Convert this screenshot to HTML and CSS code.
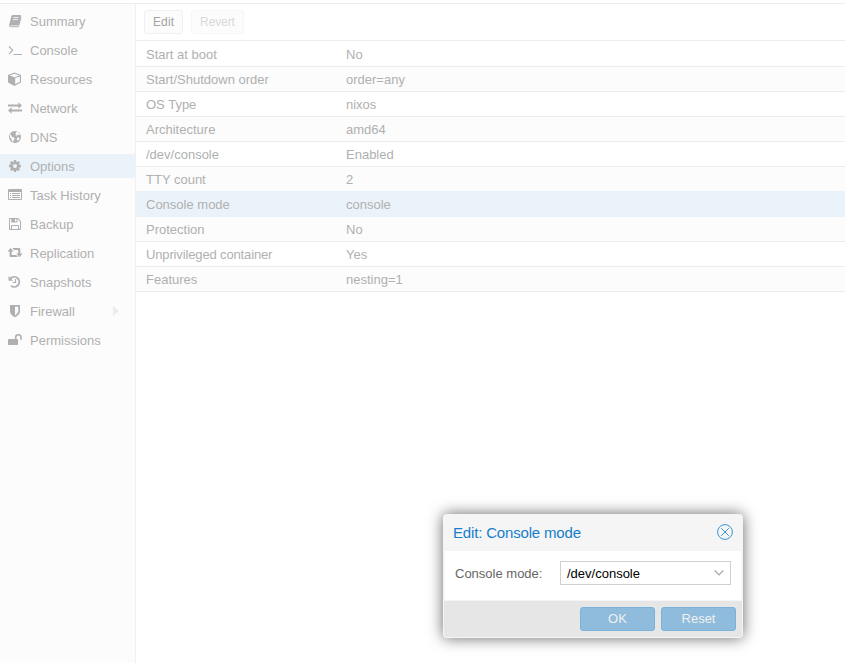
FILE: index.html
```html
<!DOCTYPE html>
<html lang="en">
<head>
    <meta charset="UTF-8">
    <meta name="viewport" content="width=device-width, initial-scale=1.0">
    <title>Container Options</title>
    <link rel="stylesheet" href="styles.css">
</head>
<body>

<div class="page">
    <!-- Side navigation -->
    <nav class="sidebar">
        <a class="nav-item">
            <svg class="icon" viewBox="0 0 16 16"><path d="M5.6 2h7.6q1.2.2.9 1.4l-2.3 8q-.3 1-1.3 1H4q-.8 0-.9.5.1.4.8.4h7.3l2.8-9.1q.6.4.4 1.1l-2.4 8q-.3.9-1.2.9H3.6Q2 14 2.1 12L4.4 3Q4.7 2 5.6 2z"/><path class="cut" d="M6.3 4.5h5.3M5.700 6.600h5.300"/></svg>
            Summary
        </a>
        <a class="nav-item">
            <svg class="icon" viewBox="0 0 16 16"><path class="line" d="M2 4.500l3.700 3.700L2 11.900M6.500 12.500H15"/></svg>
            Console
        </a>
        <a class="nav-item">
            <svg class="icon" viewBox="0 0 16 16"><path d="M7.500 1.600l6.500 2.300v7.600l-6.500 3.400L1 11.500V3.900zM7.500 2.700L2.700 4.400l4.800 1.800 4.800-1.800zM8.200 13.300l4.700-2.500V5.400L8.200 7.100z" fill-rule="evenodd"/></svg>
            Resources
        </a>
        <a class="nav-item">
            <svg class="icon" viewBox="0 0 16 16"><path d="M1 4.500h10.400V2.300L15 5.500l-3.600 3.200V6.500H1zM15 9.500H4.600V7.300L1 10.500l3.600 3.200v-2.200H15z"/></svg>
            Network
        </a>
        <a class="nav-item">
            <svg class="icon" viewBox="0 0 16 16"><circle cx="8" cy="8" r="6"/><path class="hole" d="M9.600 2.700l1.700.6 1.600 2-.6 1.300-1.100-.9-1.600.4.100 1.200-1.200-.2.600-1.200-.8-1.200zM3 5.300l1.300.9.500 1.500 2.200.900.8 1.300-1.300 1.200-.2 1.900-1-.6-.7-2.200-1.600-2z"/><path class="hole" d="M10.300 8.300l2.400.5-.6 1.700-1.500 1.300-.7-1.600z"/></svg>
            DNS
        </a>
        <a class="nav-item active">
            <svg class="icon" viewBox="-128 -128 2048 2048"><path d="M1152 896q0-106-75-181t-181-75-181 75-75 181 75 181 181 75 181-75 75-181zm512-109v222q0 12-8 23t-20 13l-185 28q-19 54-39 91 35 50 107 138 10 12 10 25t-9 23q-27 37-99 108t-94 71q-12 0-26-9l-138-108q-44 23-91 38-16 136-29 186-7 28-36 28h-222q-14 0-24.500-8.500t-11.500-21.500l-28-184q-49-16-90-37l-141 107q-10 9-25 9-14 0-25-11-126-114-165-168-7-10-7-23 0-12 8-23 15-21 51-66.500t54-70.500q-27-50-41-99l-183-27q-13-2-21-12.500t-8-23.500v-222q0-12 8-23t19-13l186-28q14-46 39-92-40-57-107-138-10-12-10-24 0-10 9-23 26-36 98.500-107.500t94.500-71.500q13 0 26 10l138 107q44-23 91-38 16-136 29-186 7-28 36-28h222q14 0 24.500 8.500t11.500 21.500l28 184q49 16 90 37l142-107q9-9 24-9 13 0 25 10 129 119 165 170 7 8 7 22 0 12-8 23-15 21-51 66.500t-54 70.500q26 50 41 98l183 28q13 2 21 12.500t8 23.500z"/></svg>
            Options
        </a>
        <a class="nav-item">
            <svg class="icon" viewBox="0 0 16 16"><path d="M2 2h12q1 0 1 1v9q0 1-1 1H2q-1 0-1-1V3q0-1 1-1zm0 3v6.600q0 .4.400.4h11.200q.4 0 .4-.4V5z" fill-rule="evenodd"/><path d="M3 6h1v1H3zM5 6h8v1H5zM3 8h1v1H3zM5 8h8v1H5zM3 10h1v1H3zM5 10h8v1H5z"/></svg>
            Task History
        </a>
        <a class="nav-item">
            <svg class="icon" viewBox="0 0 16 16"><path d="M2.800 2H11l3 3v8.200q0 .8-.8.800H2.800q-.8 0-.8-.8V2.800q0-.8.800-.8zM3 3v10h1V9.700q0-.7.700-.7h6.600q.7 0 .7.700V13h1V5.500L10.500 3v2.700q0 .8-.8.800H5q-.8 0-.8-.8V3zm5 0v2.500h1.500V3zM5 10v3h6v-3z" fill-rule="evenodd"/></svg>
            Backup
        </a>
        <a class="nav-item">
            <svg class="icon" viewBox="0 0 16 16"><path d="M3.500 3L6.700 6.600H4.700V10h4.500l1.800 2H3.400q-.8 0-.8-.8V6.600H.5zM5.400 3h7q.9 0 .9.900v4.700h2.200L12.400 12.200 9.200 8.600h2V5H7z"/></svg>
            Replication
        </a>
        <a class="nav-item">
            <svg class="icon" viewBox="0 0 16 16"><path class="ring" d="M3.600 4.500A5 5 0 1 1 4 11.700"/><path d="M1.500 2v4.700h4.700z"/><path class="line" d="M8.500 5v3.500H5.700"/></svg>
            Snapshots
        </a>
        <a class="nav-item">
            <svg class="icon" viewBox="0 0 16 16"><path d="M3 2h10v6.500q0 3.300-5 5.800-5-2.500-5-5.800zm5 1.700v8.800q3.300-2 3.300-4.200V3.700z" fill-rule="evenodd"/></svg>
            Firewall
            <span class="expander"></span>
        </a>
        <a class="nav-item">
            <svg class="icon" viewBox="0 0 16 16"><path d="M1.700 7h8.600q.7 0 .7.700v4.600q0 .7-.7.700H1.700q-.7 0-.7-.7V7.700q0-.7.700-.7z"/><path class="shackle" d="M8.700 7.500V5.400a2.650 2.650 0 0 1 5.300 0v2.300"/></svg>
            Permissions
        </a>
    </nav>

    <!-- Options panel -->
    <main class="content">
        <div class="toolbar">
            <button class="tool-btn">Edit</button>
            <button class="tool-btn" disabled>Revert</button>
        </div>
        <div class="grid">
            <div class="row"><span class="key">Start at boot</span><span>No</span></div>
            <div class="row"><span class="key">Start/Shutdown order</span><span>order=any</span></div>
            <div class="row"><span class="key">OS Type</span><span>nixos</span></div>
            <div class="row"><span class="key">Architecture</span><span>amd64</span></div>
            <div class="row"><span class="key">/dev/console</span><span>Enabled</span></div>
            <div class="row"><span class="key">TTY count</span><span>2</span></div>
            <div class="row selected"><span class="key">Console mode</span><span>console</span></div>
            <div class="row"><span class="key">Protection</span><span>No</span></div>
            <div class="row"><span class="key tight">Unprivileged container</span><span>Yes</span></div>
            <div class="row"><span class="key">Features</span><span>nesting=1</span></div>
        </div>
    </main>
</div>

<!-- Edit window -->
<div class="dialog">
    <div class="dialog-header">
        <span class="dialog-title">Edit: Console mode</span>
        <svg class="close" viewBox="0 0 16 16"><circle cx="8" cy="8" r="7.400"/><path d="M4.200 4.200l7.600 7.600M11.800 4.200l-7.600 7.600"/></svg>
    </div>
    <div class="dialog-body">
        <span class="field-label">Console mode:</span>
        <div class="combo">
            <span>/dev/console</span>
            <svg class="chevron" viewBox="0 0 10 8"><path d="M.8 1.500L5 5.900l4.200-4.400"/></svg>
        </div>
    </div>
    <div class="dialog-footer">
        <button class="action-btn">OK</button>
        <button class="action-btn">Reset</button>
    </div>
</div>

</body>
</html>
```
FILE: styles.css
```css
* {
    box-sizing: border-box;
}
body {
    margin: 0;
    height: 663px;
    overflow: hidden;
    background: #fff;
    color: #b0b0b0;
    font-family: "Liberation Sans", Arial, sans-serif;
    font-size: 13px;
}
button {
    font: inherit;
    padding: 0;
}
.page {
    display: flex;
    height: 663px;
    padding-top: 3px;
}
.sidebar {
    display: flex;
    flex-direction: column;
    gap: 5px;
    width: 136px;
    padding-top: 5px;
    background: #fcfcfc;
    border-top: 1px solid #ececec;
    border-right: 1px solid #f0f0f0;
}
.nav-item {
    display: flex;
    align-items: center;
    height: 24px;
    padding: 2px 16px 0 7px;
    line-height: 22px;
}
.nav-item.active {
    background: #ebf3fa;
}
.icon {
    width: 16px;
    height: 16px;
    margin: 0 7px 2px 0;
    fill: #b0b0b0;
}
.icon .line,
.icon .ring,
.icon .shackle {
    fill: none;
    stroke: #b0b0b0;
    stroke-width: 1.2;
}
.icon .ring {
    stroke-width: 1.9;
}
.icon .shackle {
    stroke-width: 1.6;
}
.icon .cut {
    fill: none;
    stroke: #fcfcfc;
    stroke-width: 0.8;
}
.icon .hole {
    fill: #fcfcfc;
}
.expander {
    margin: 0 0 2px auto;
    border-left: 6px solid #ececec;
    border-top: 5px solid transparent;
    border-bottom: 5px solid transparent;
}
.content {
    flex: 1;
    border-top: 1px solid #ececec;
}
.toolbar {
    display: flex;
    gap: 8px;
    height: 37px;
    padding: 6px 8px;
    border-bottom: 1px solid #ececec;
}
.tool-btn {
    height: 24px;
    padding: 0 8px 1px;
    color: #a3a3a3;
    background: #fcfcfc;
    border: 1px solid #f0f0f0;
    border-radius: 3px;
    font-size: 12px;
    letter-spacing: 0.1px;
}
.tool-btn:disabled {
    color: #d8d8d8;
    border-color: #f6f6f6;
    letter-spacing: -0.1px;
}
.row {
    display: flex;
    height: 25px;
    padding: 0 10px;
    line-height: 26px;
    border-bottom: 1px solid #ededed;
}
.row:first-child {
    height: 26px;
    line-height: 28px;
}
.row:nth-child(even) {
    background: #fcfcfc;
}
.row.selected {
    background: #ebf3fa;
    border-color: #ebf3fa;
    box-shadow: 0 -1px #ebf3fa;
}
.key {
    width: 200px;
}
.key.tight {
    letter-spacing: -0.14px;
}
.dialog {
    position: absolute;
    left: 443px;
    top: 514px;
    width: 300px;
    height: 124px;
    background: #f5f5f5;
    border-radius: 4px;
    box-shadow: 0 0 15px rgba(0, 0, 0, 0.6);
}
.dialog-header {
    display: flex;
    align-items: center;
    justify-content: space-between;
    height: 37px;
    padding: 0 10px;
    color: #157fcc;
    font-size: 15px;
    letter-spacing: -0.17px;
}
.close {
    width: 16px;
    height: 16px;
    margin-bottom: 2px;
    fill: none;
    stroke: #3c94d3;
    stroke-width: 1;
}
.dialog-body {
    display: flex;
    height: 49px;
    margin: 0 2px;
    padding: 10px;
    background: #fff;
    color: #666;
}
.field-label {
    width: 105px;
    line-height: 25px;
}
.combo {
    display: flex;
    align-items: center;
    justify-content: space-between;
    width: 171px;
    height: 24px;
    padding: 0 6px;
    color: #000;
    border: 1px solid #cfcfcf;
}
.chevron {
    width: 10px;
    height: 8px;
    fill: none;
    stroke: #a8a8a8;
    stroke-width: 1.2;
}
.dialog-footer {
    display: flex;
    justify-content: flex-end;
    gap: 6px;
    height: 36px;
    margin: 1px 1px 0;
    padding: 6px;
    background: #e6e6e6;
    border-radius: 0 0 3px 3px;
}
.action-btn {
    width: 75px;
    height: 24px;
    padding-bottom: 1px;
    color: #f0f0f0;
    background: #8fbbdd;
    border: 1px solid #7bb2dc;
    border-radius: 3px;
}
```
